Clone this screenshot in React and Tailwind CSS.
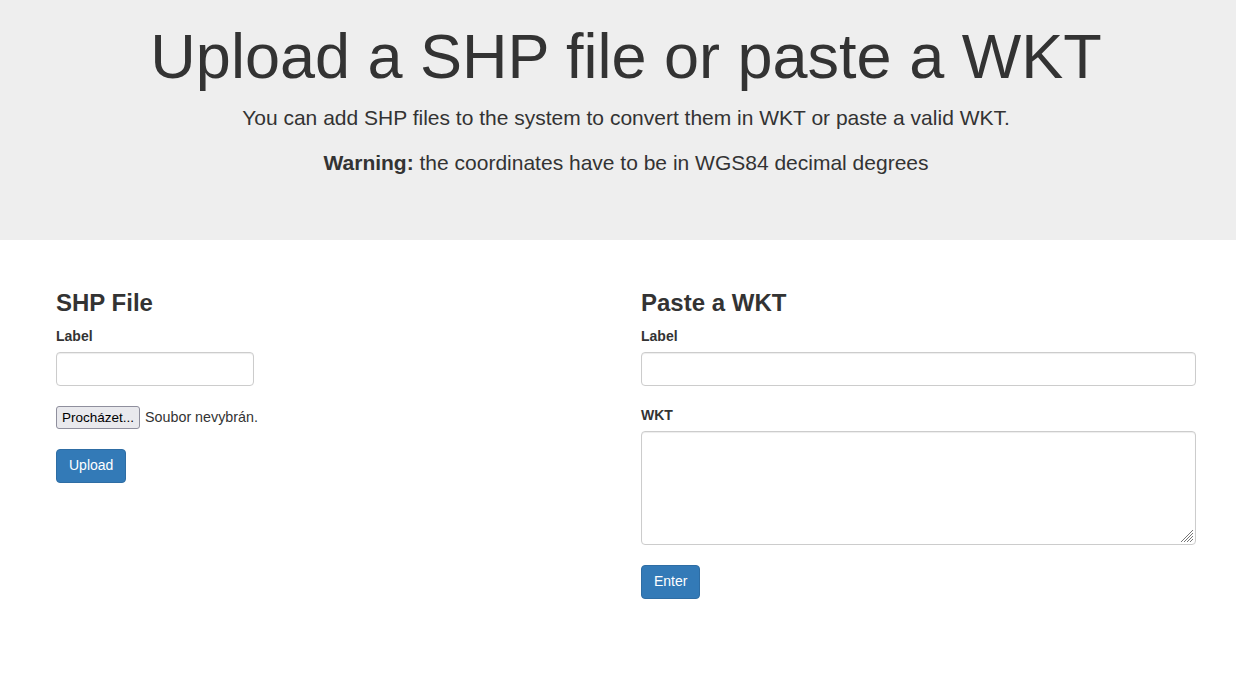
export default function App() {
    const font = { fontFamily: '"Liberation Sans", Arial, sans-serif' };

    return (
        <div style={font} className="min-h-[676px] bg-white text-[#333] text-[14px] leading-[1.42857]">
            <div className="bg-[#eee] pt-[22px] pb-[47px] mb-[30px]">
                <div className="w-[1170px] ml-[41px] px-[15px] text-center">
                    <h1 className="text-[63px] leading-[1.1] mb-[12px]">Upload a SHP file or paste a WKT</h1>
                    <p className="text-[21px] leading-[30px] mb-[15px]">
                        You can add SHP files to the system to convert them in WKT or paste a valid WKT.
                    </p>
                    <p className="text-[21px] leading-[30px] mb-[15px]">
                        <b>Warning:</b> the coordinates have to be in WGS84 decimal degrees
                    </p>
                </div>
            </div>

            <div className="w-[1170px] ml-[41px] flex">
                <div className="w-1/2 px-[15px]">
                    <h3 className="text-[24px] font-bold leading-[1.1] mt-[20px] mb-[10px]">SHP File</h3>
                    <div className="mb-5">
                        <label className="block font-bold mb-[5px]">Label</label>
                        <input
                            type="text"
                            className="block w-[198px] h-[34px] px-3 border border-[#ccc] rounded-[4px] shadow-[inset_0_1px_1px_rgba(0,0,0,0.075)] outline-none"
                        />
                    </div>
                    <div className="mb-5 flex items-center h-[23px] pt-[1px]">
                        <span className="h-[23px] px-[5px] flex items-center bg-[#e9e9ed] border border-[#8f8f9d] rounded-[3px] text-black text-[13.5px]">
                            Procházet...
                        </span>
                        <span className="ml-[5px] text-[14.3px]">Soubor nevybrán.</span>
                    </div>
                    <button className="h-[34px] px-3 bg-[#337ab7] border border-[#2e6da4] rounded-[4px] text-white text-[14px]">
                        Upload
                    </button>
                </div>

                <div className="w-1/2 px-[15px]">
                    <h3 className="text-[24px] font-bold leading-[1.1] mt-[20px] mb-[10px]">Paste a WKT</h3>
                    <div className="mb-5">
                        <label className="block font-bold mb-[5px]">Label</label>
                        <input
                            type="text"
                            className="block w-full h-[34px] px-3 border border-[#ccc] rounded-[4px] shadow-[inset_0_1px_1px_rgba(0,0,0,0.075)] outline-none"
                        />
                    </div>
                    <div className="mb-5">
                        <label className="block font-bold mb-[5px]">WKT</label>
                        <div className="relative">
                            <textarea
                                rows={5}
                                className="block w-full h-[114px] px-3 py-[6px] border border-[#ccc] rounded-[4px] shadow-[inset_0_1px_1px_rgba(0,0,0,0.075)] outline-none resize-none"
                            />
                            <svg className="absolute right-[3px] bottom-[3px]" width="13" height="13" viewBox="0 0 13 13">
                                <g stroke="#777" strokeWidth="1">
                                    <line x1="13" y1="1" x2="1" y2="13" />
                                    <line x1="13" y1="4" x2="4" y2="13" />
                                    <line x1="13" y1="7" x2="7" y2="13" />
                                    <line x1="13" y1="10" x2="10" y2="13" />
                                </g>
                            </svg>
                        </div>
                    </div>
                    <button className="h-[34px] px-3 bg-[#337ab7] border border-[#2e6da4] rounded-[4px] text-white text-[14px]">
                        Enter
                    </button>
                </div>
            </div>
        </div>
    );
}
